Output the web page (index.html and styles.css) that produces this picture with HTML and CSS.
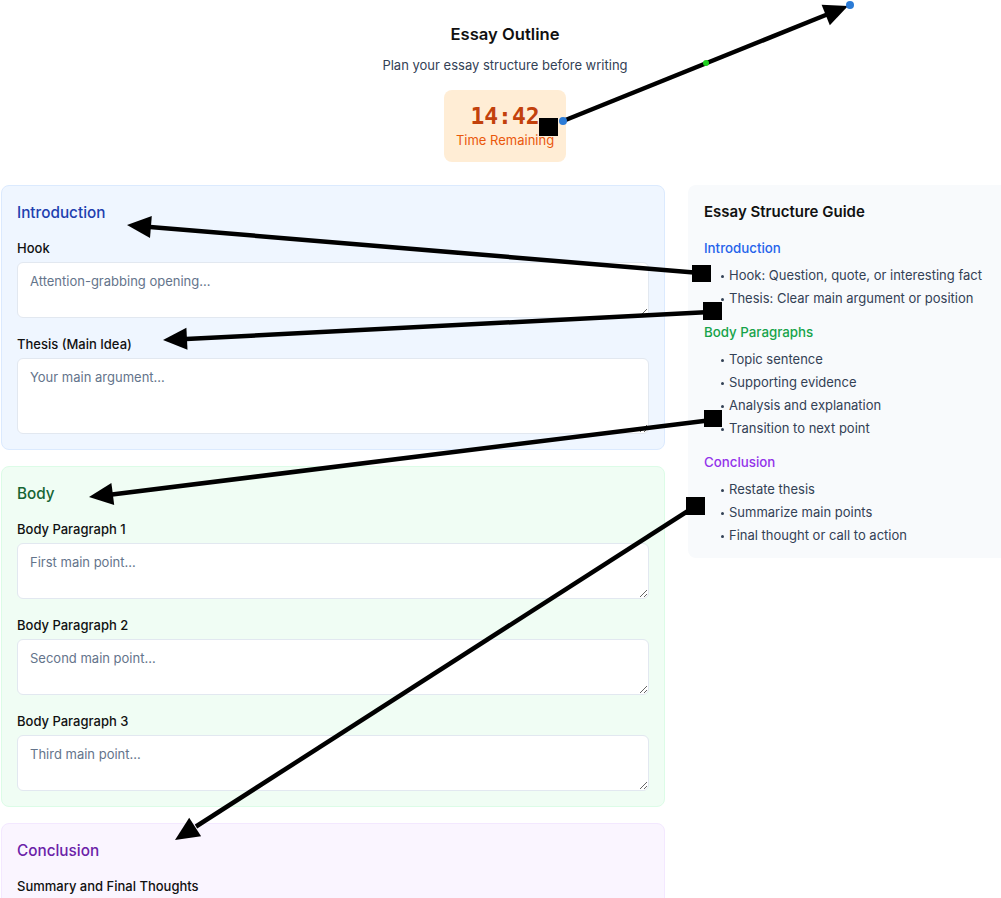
FILE: index.html
```html
<!DOCTYPE html>
<html lang="en">
<head>
<meta charset="utf-8">
<title>Essay Outline</title>
<link rel="stylesheet" href="styles.css">
</head>
<body>
<div class="page">
  <header class="header">
    <h1 class="title">Essay Outline</h1>
    <p class="subtitle">Plan your essay structure before writing</p>
    <div class="timer">
      <div class="time">14:42</div>
      <div class="time-label">Time Remaining</div>
    </div>
  </header>

  <div class="layout">
    <main class="sections">
      <section class="card card-intro">
        <h2 class="card-title">Introduction</h2>
        <div class="field">
          <label class="field-label">Hook</label>
          <textarea class="input input-short" placeholder="Attention-grabbing opening..."></textarea>
        </div>
        <div class="field">
          <label class="field-label">Thesis (Main Idea)</label>
          <textarea class="input input-tall" placeholder="Your main argument..."></textarea>
        </div>
      </section>

      <section class="card card-body">
        <h2 class="card-title">Body</h2>
        <div class="field">
          <label class="field-label">Body Paragraph 1</label>
          <textarea class="input input-short" placeholder="First main point..."></textarea>
        </div>
        <div class="field">
          <label class="field-label">Body Paragraph 2</label>
          <textarea class="input input-short" placeholder="Second main point..."></textarea>
        </div>
        <div class="field">
          <label class="field-label">Body Paragraph 3</label>
          <textarea class="input input-short" placeholder="Third main point..."></textarea>
        </div>
      </section>

      <section class="card card-conclusion">
        <h2 class="card-title">Conclusion</h2>
        <div class="field">
          <label class="field-label">Summary and Final Thoughts</label>
          <textarea class="input input-tall" placeholder="Restate your thesis and wrap up..."></textarea>
        </div>
      </section>
    </main>

    <aside class="guide">
      <h3 class="guide-title">Essay Structure Guide</h3>
      <div class="guide-section">
        <h4 class="guide-heading heading-intro">Introduction</h4>
        <ul class="guide-list">
          <li>Hook: Question, quote, or interesting fact</li>
          <li>Thesis: Clear main argument or position</li>
        </ul>
      </div>
      <div class="guide-section">
        <h4 class="guide-heading heading-body">Body Paragraphs</h4>
        <ul class="guide-list">
          <li>Topic sentence</li>
          <li>Supporting evidence</li>
          <li>Analysis and explanation</li>
          <li>Transition to next point</li>
        </ul>
      </div>
      <div class="guide-section">
        <h4 class="guide-heading heading-conclusion">Conclusion</h4>
        <ul class="guide-list">
          <li>Restate thesis</li>
          <li>Summarize main points</li>
          <li>Final thought or call to action</li>
        </ul>
      </div>
    </aside>
  </div>

  <svg class="annotations" width="1001" height="898" viewBox="0 0 1001 898" aria-hidden="true">
    <g stroke="#000" stroke-width="4.5" fill="none">
      <line x1="563" y1="121" x2="827" y2="14.5"/>
      <line x1="700" y1="273" x2="150" y2="227"/>
      <line x1="710" y1="312" x2="186" y2="339"/>
      <line x1="712" y1="420" x2="112" y2="494.5"/>
      <line x1="694" y1="507" x2="196" y2="826.5"/>
    </g>
    <g fill="#000">
      <polygon points="848,6 829.8,25.2 821.6,4.8"/>
      <polygon points="127,225 151.8,216 150,238"/>
      <polygon points="163,340 187.5,349.8 186.4,327.8"/>
      <polygon points="89,497 114.2,504.9 111.4,483.1"/>
      <polygon points="175,840 201.1,836.2 189.2,817.7"/>
      <rect x="539" y="118" width="19" height="18"/>
      <rect x="692" y="265" width="19" height="17"/>
      <rect x="703" y="302" width="19" height="18"/>
      <rect x="704" y="410" width="18" height="17"/>
      <rect x="686" y="497" width="19" height="18"/>
    </g>
    <circle cx="563" cy="121" r="4" fill="#2b7bd6"/>
    <circle cx="850" cy="5" r="4" fill="#2b7bd6"/>
    <circle cx="706" cy="63" r="3" fill="#1fd11f"/>
  </svg>
</div>
</body>
</html>
```

FILE: styles.css
```css
html, body {
  margin: 0;
  padding: 0;
  overflow: hidden;
  background: #ffffff;
}

body {
  font-family: Inter, "Noto Sans", "Liberation Sans", sans-serif;
  color: #111111;
}

.page {
  position: relative;
  width: 1008px;
  margin-left: 1px;
}

/* Header */
.header {
  display: flex;
  flex-direction: column;
  align-items: center;
  padding-top: 20px;
  margin-bottom: 23px;
}

.title {
  margin: 0;
  font-size: 16.6px;
  line-height: 28px;
  font-weight: 600;
  color: #111111;
}

.subtitle {
  margin: 7px 0 0;
  font-size: 13px;
  line-height: 20px;
  color: #334155;
}

.timer {
  margin-top: 15px;
  padding: 12px 12px;
  background: #ffedd5;
  border-radius: 8px;
  text-align: center;
}

.time {
  font-family: "DejaVu Sans Mono", "Liberation Mono", monospace;
  font-weight: 700;
  font-size: 23px;
  line-height: 28px;
  color: #c2410c;
}

.time-label {
  font-size: 13px;
  line-height: 20px;
  color: #ea580c;
}

/* Layout */
.layout {
  display: grid;
  grid-template-columns: 664px 320px;
  column-gap: 23px;
  align-items: start;
}

.sections {
  display: flex;
  flex-direction: column;
  gap: 16px;
}

.card {
  border: 1px solid;
  border-radius: 8px;
  padding: 15px;
  display: flex;
  flex-direction: column;
  gap: 16px;
}

.card-intro {
  background: #eff6ff;
  border-color: #dbeafe;
}

.card-body {
  background: #f0fdf4;
  border-color: #dcfce7;
}

.card-conclusion {
  background: #faf5ff;
  border-color: #f3e8ff;
}

.card-title {
  margin: 0 0 -3px;
  font-size: 15.3px;
  line-height: 24px;
  font-weight: 500;
}

.card-intro .card-title { color: #1e40af; }
.card-body .card-title { color: #166534; }
.card-conclusion .card-title { color: #6b21a8; }

.field {
  display: flex;
  flex-direction: column;
}

.field-label {
  font-size: 13px;
  line-height: 20px;
  font-weight: 500;
  color: #111111;
  margin-bottom: 4px;
}

.input {
  display: block;
  box-sizing: border-box;
  width: 100%;
  margin: 0;
  padding: 8px 12px;
  font-family: Inter, "Noto Sans", "Liberation Sans", sans-serif;
  font-size: 13px;
  line-height: 20px;
  color: #111111;
  background: #ffffff;
  border: 1px solid #e2e8f0;
  border-radius: 6px;
  outline: none;
}

.input::placeholder {
  color: #64748b;
}

.input-short { height: 56px; }
.input-tall { height: 76px; }

/* Guide */
.guide {
  background: #f8fafc;
  border-radius: 8px;
  padding: 16px 16px 13px;
}

.guide-title {
  margin: 0 0 15px;
  font-size: 15px;
  line-height: 22px;
  font-weight: 600;
  color: #111111;
}

.guide-section {
  margin-bottom: 14px;
}

.guide-section:last-child {
  margin-bottom: 0;
}

.guide-heading {
  margin: 0 0 7px;
  font-size: 13.3px;
  line-height: 20px;
  font-weight: 500;
}

.heading-intro { color: #2563eb; }
.heading-body { color: #16a34a; }
.heading-conclusion { color: #9333ea; }

.guide-list {
  list-style: none;
  margin: 0;
  padding: 0 0 0 16px;
  display: flex;
  flex-direction: column;
  gap: 3px;
}

.guide-list li {
  position: relative;
  padding-left: 9px;
  font-size: 13px;
  line-height: 20px;
  height: 20px;
  color: #334155;
}

.guide-list li::before {
  content: "";
  position: absolute;
  left: 1px;
  top: 10px;
  width: 3px;
  height: 3px;
  border-radius: 50%;
  background: #334155;
}

/* Annotation overlay */
.annotations {
  position: absolute;
  top: 0;
  left: -1px;
  pointer-events: none;
}
```
